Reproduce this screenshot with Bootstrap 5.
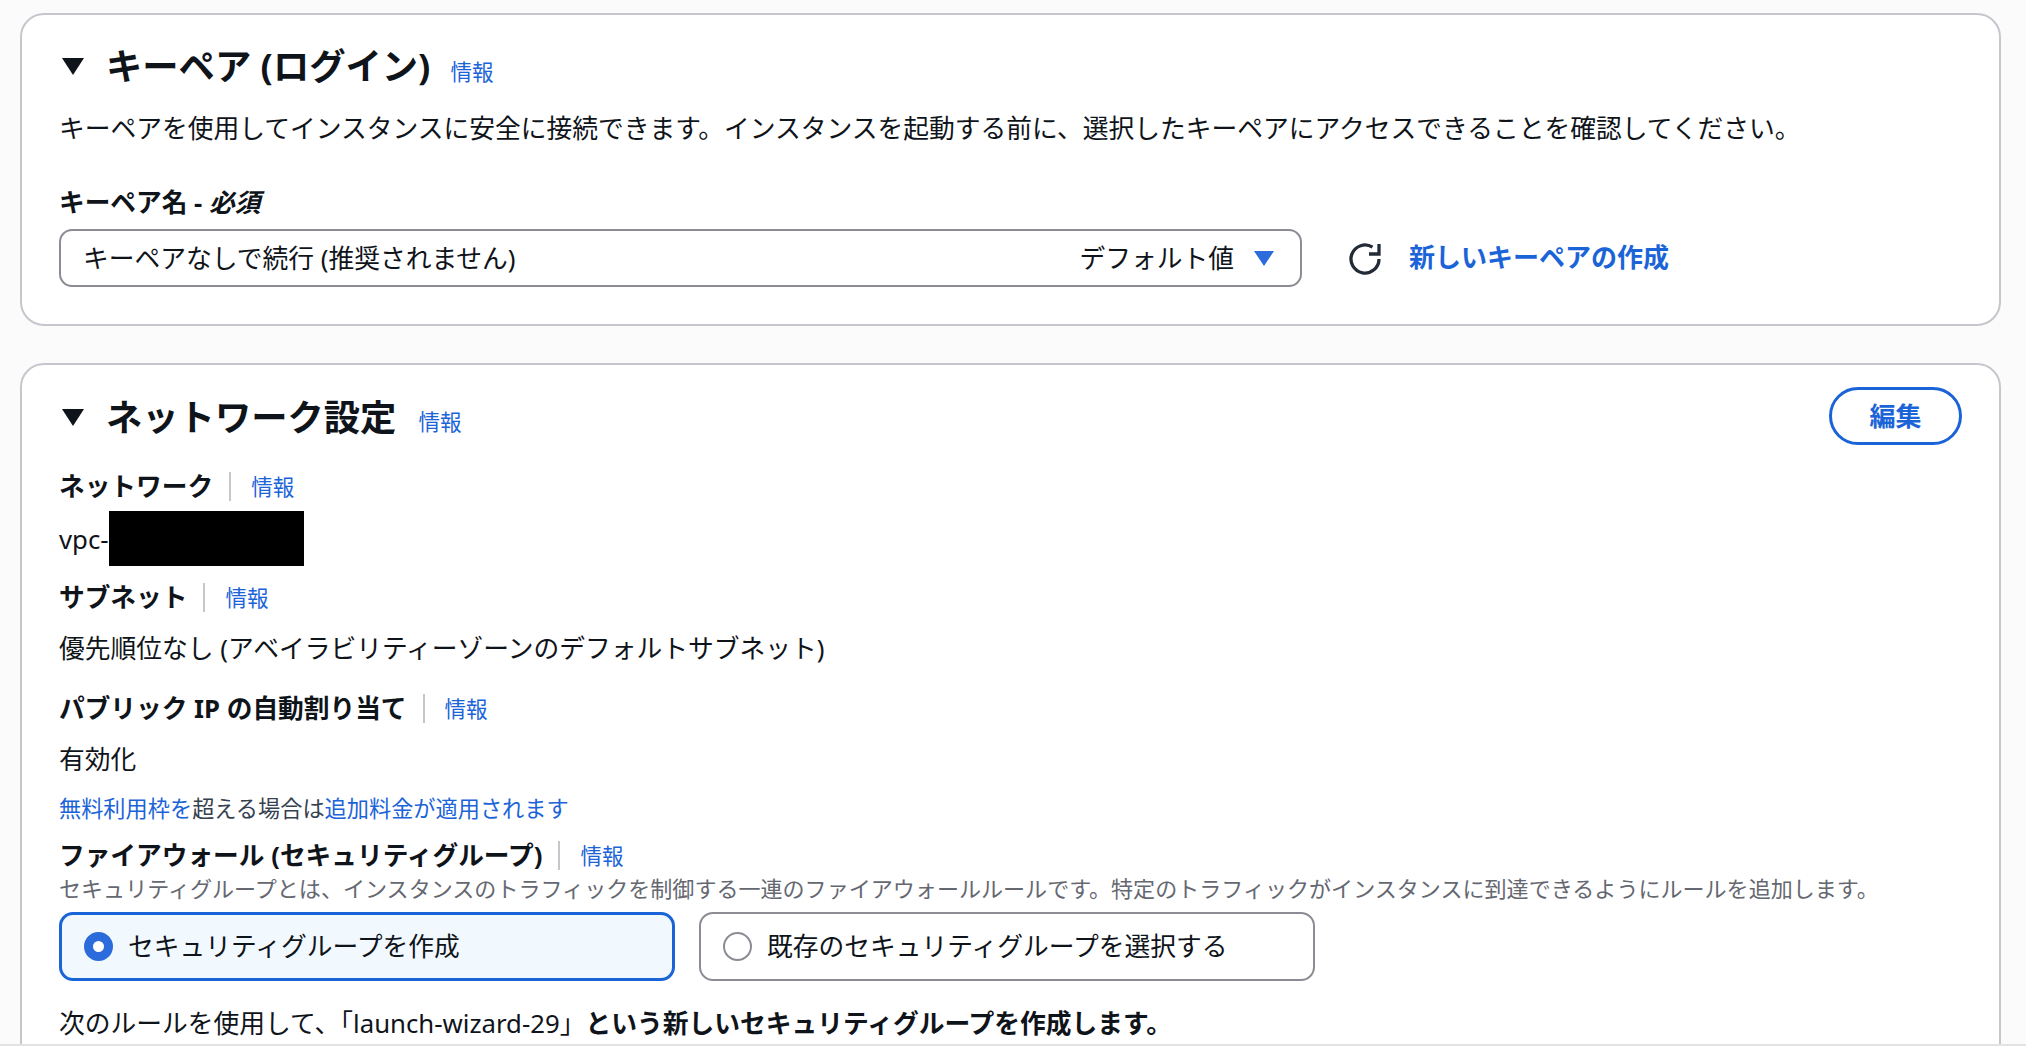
<!doctype html>
<html lang="ja">
<head>
<meta charset="utf-8">
<title>キーペアとネットワーク設定</title>
<link href="https://cdn.jsdelivr.net/npm/bootstrap@5.3.0/dist/css/bootstrap.min.css" rel="stylesheet">
<style>
html,body{height:100%;overflow:hidden}
body{background:#fbfbfb;color:#0f141a;font-family:"Noto Sans","Noto Sans CJK JP",sans-serif;font-size:25.75px}
a{color:#1b64d8;text-decoration:none}
.shot{height:1044px;overflow:hidden;padding:13px 25px 0 20px}
.tail{height:2px;background:#e3e3e3}
.panel{background:#fff;border:2px solid #c6c6cd;border-radius:24px;padding:0 37px}
.panel-one{height:313px}
.panel-two{margin-top:37px;height:800px}
.tri{width:0;height:0;border-left:11px solid transparent;border-right:11px solid transparent;border-top:17px solid #0f141a;flex:none;margin-left:3px}
.ttl{font-size:36.3px;font-weight:700;line-height:48px;margin:0 0 0 22px}
.inf{font-size:21.5px;line-height:30px;margin-left:20px;margin-top:11px}
.inf-two{margin-left:22px;margin-top:9px}
.head-one{padding-top:27px;height:75px}
.lead-one{line-height:36px;margin-top:20px}
.lbl{font-weight:700;font-size:25.7px;line-height:32px}
.lbl-one{margin-top:41px}
.sel{width:1243px;height:58px;border:2px solid #8c8c94;border-radius:13px;padding:0 26px 0 22px;background:#fff;margin-top:10px}
.def{margin-right:20px}
.car{width:0;height:0;border-left:10px solid transparent;border-right:10px solid transparent;border-top:15px solid #2b6bdc}
.ref{margin-left:47px;margin-top:12px}
.new{font-weight:700;font-size:26px;margin-left:28px;margin-top:8px}
.head-two{padding-top:29px;height:75px}
.edit{width:133px;height:58px;border:3px solid #1b64d8;border-radius:30px;color:#1b64d8;font-weight:700;font-size:26px;background:#fff;padding:0;margin-top:22px}
.fld{height:37px}
.sep{width:2px;background:#c6c6cd;height:29px;margin:0 20px 0 16px}
.sep + .inf{margin:0}
.val{line-height:34px}
.rect{width:195px;height:55px;background:#000;display:block}
.fine{font-size:22.2px;line-height:30px;color:#354150}
.desc{font-size:22.05px;line-height:28px;color:#656871}
.opt{height:69px;border-radius:14px;padding:0 0 0 22px;gap:15px}
.opt-on{width:616px;background:#f1f9ff;border:3px solid #1b64d8}
.opt-off{width:616px;background:#fff;border:2px solid #8c8c94}
.dot{width:29px;height:29px;border-radius:50%;flex:none;background:#fff}
.dot-on{border:9px solid #2b6bdc}
.dot-off{border:2px solid #8c8c94}
.rule{line-height:34px;margin:25px 0 0}
.g23{margin-top:23px}.g6{margin-top:6px}.g12{margin-top:13px}.g15{margin-top:15px}.g25{margin-top:25px}.g13{margin-top:13px}.g18{margin-top:18px}.g10{margin-top:10px}
.opts{gap:24px}
</style>
</head>
<body>
<div class="shot">
  <section class="panel panel-one">
    <div class="d-flex align-items-center head-one">
      <span class="tri"></span>
      <h2 class="ttl">キーペア (ログイン)</h2>
      <a href="#" class="inf">情報</a>
    </div>
    <p class="lead-one mb-0">キーペアを使用してインスタンスに安全に接続できます。インスタンスを起動する前に、選択したキーペアにアクセスできることを確認してください。</p>
    <div class="lbl lbl-one">キーペア名 - <em>必須</em></div>
    <div class="d-flex align-items-center">
      <div class="sel d-flex align-items-center justify-content-between">
        <span>キーペアなしで続行 (推奨されません)</span>
        <span class="d-flex align-items-center"><span class="def">デフォルト値</span><span class="car"></span></span>
      </div>
      <svg class="ref flex-none" width="32" height="32" viewBox="0 0 32 32" fill="none" stroke="#232b37" stroke-width="3.3"><path d="M30 16A14 14 0 1 1 23.5 4.2"/><path d="M30 1v10H20"/></svg>
      <a href="#" class="new">新しいキーペアの作成</a>
    </div>
  </section>

  <section class="panel panel-two">
    <div class="d-flex align-items-start justify-content-between">
      <div class="d-flex align-items-center head-two">
        <span class="tri"></span>
        <h2 class="ttl">ネットワーク設定</h2>
        <a href="#" class="inf inf-two">情報</a>
      </div>
      <button type="button" class="btn edit">編集</button>
    </div>
    <div class="d-flex align-items-center fld lbl g23">ネットワーク<span class="sep"></span><a href="#" class="inf fw-normal">情報</a></div>
    <div class="d-flex align-items-center val g6"><span>vpc-</span><span class="rect"></span></div>
    <div class="d-flex align-items-center fld lbl g12">サブネット<span class="sep"></span><a href="#" class="inf fw-normal">情報</a></div>
    <div class="val g15">優先順位なし (アベイラビリティーゾーンのデフォルトサブネット)</div>
    <div class="d-flex align-items-center fld lbl g25">パブリック IP の自動割り当て<span class="sep"></span><a href="#" class="inf fw-normal">情報</a></div>
    <div class="val g15">有効化</div>
    <div class="fine g18"><a href="#">無料利用枠を</a>超える場合は<a href="#">追加料金が適用されます</a></div>
    <div class="d-flex align-items-center fld lbl g13">ファイアウォール (セキュリティグループ)<span class="sep"></span><a href="#" class="inf fw-normal">情報</a></div>
    <div class="desc">セキュリティグループとは、インスタンスのトラフィックを制御する一連のファイアウォールルールです。特定のトラフィックがインスタンスに到達できるようにルールを追加します。</div>
    <div class="d-flex opts g10">
      <label class="opt opt-on d-flex align-items-center"><span class="dot dot-on"></span>セキュリティグループを作成</label>
      <label class="opt opt-off d-flex align-items-center"><span class="dot dot-off"></span>既存のセキュリティグループを選択する</label>
    </div>
    <p class="rule">次のルールを使用して、「launch-wizard-29」<strong>という新しいセキュリティグループを作成します。</strong></p>
  </section>
</div>
<div class="tail"></div>
<script src="https://cdn.jsdelivr.net/npm/bootstrap@5.3.0/dist/js/bootstrap.bundle.min.js"></script>
</body>
</html>
